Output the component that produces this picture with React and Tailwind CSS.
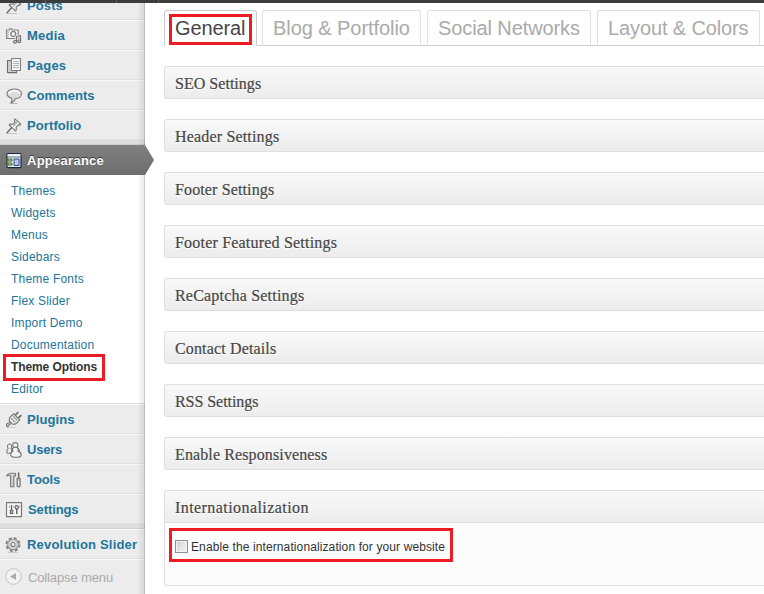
import React from "react";

const stroke = {
  fill: "none",
  stroke: "#6c6c6c",
  strokeWidth: 1.1,
  strokeLinejoin: "round",
  strokeLinecap: "round",
};

function Icon({ name }) {
  return (
    <svg width="16" height="16" viewBox="0 0 16 16" className="block shrink-0 overflow-visible" {...stroke}>
      {shapes[name]}
    </svg>
  );
}

const pin = (
  <>
    <path d="M1.500 15.500h9" stroke="#c4c4c4" />
    <path d="M1 14.700L5.500 9.800" stroke="#6c6c6c" strokeWidth="1.400" />
    <path d="M8.800 .8l6 5.400-.9 1-1.500-.3-2.300 2.400.2 2.500-1 1L3.200 7l1-1 2.600.2 2.300-2.400-.7-1.700z" fill="#f2f2f2" stroke="#777" />
    <path d="M7.500 8l3-3.500" stroke="#b0b0b0" strokeWidth="1.500" />
  </>
);

const shapes = {
  pin,
  media: (
    <>
      <path d="M3.500 2V.8h2.400V2h6.300v8.500H.5V2z" fill="#f4f4f4" stroke="#808080" />
      <path d="M.8 2.500h1.900v7.500H.8z" fill="#c8c8c8" stroke="none" />
      <circle cx="7.300" cy="6" r="2.500" fill="#e4e4e4" stroke="#777" />
      <circle cx="7.300" cy="6" r="1" fill="#fff" stroke="none" />
      <path d="M10.500 13.500V8.500l4-.8v5" stroke="#ececec" strokeWidth="2.600" />
      <path d="M10.500 13.500V8.500l4-.8v5" stroke="#777" strokeWidth="1.200" />
      <ellipse cx="9" cy="13.800" rx="1.500" ry="1.300" fill="#eee" />
      <ellipse cx="13.200" cy="13.300" rx="1.500" ry="1.300" fill="#eee" />
    </>
  ),
  pages: (
    <>
      <path d="M2 15.500h9" stroke="#ccc" />
      <path d="M5.500 2.500h-4v12h9v-2" fill="#ccc" />
      <path d="M5.500 .5h9v12h-9z" fill="#f5f5f5" stroke="#808080" />
      <path d="M7.500 3.500h5M7.500 5.500h5M7.500 7.500h5M7.500 9.500h5" stroke="#b4b4b4" />
    </>
  ),
  comments: (
    <>
      <path d="M4 15.500h7" stroke="#bbb" />
      <path
        d="M8.300 1c4.200 0 7.200 1.900 7.200 4.800s-2.800 4.900-6.300 4.900c-.6 2.200-2 3.600-4.200 4.200.8-1.400 1-2.900.8-4.600C3 9.500 1 8 1 5.800 1 2.900 4.100 1 8.300 1z"
        fill="#dcdcdc"
        stroke="#7c7c7c"
      />
      <path d="M3 5.500c.5-1.700 2.500-2.600 5.200-2.600s4.700.9 5.300 2.600" stroke="#fff" strokeWidth="1.400" />
    </>
  ),
  appearance: (
    <>
      <rect x="1" y=".7" width="14" height="14" rx="1" fill="#d5ecdf" stroke="#1d2740" strokeWidth="1.200" />
      <path d="M2 2h12" stroke="#fff" strokeWidth="1.500" />
      <path d="M2 4h12" stroke="#6b7d8f" />
      <path d="M2.500 6h3.500v2H2.500zM2.500 10h3.500v2H2.500z" fill="#d6e69a" stroke="#4b6a2c" strokeWidth="1" />
      <path d="M8.500 6H13v6.500H8.500z" fill="#b9c3f7" stroke="#3f4590" strokeWidth="1" />
    </>
  ),
  plugins: (
    <>
      <path d="M3 15.300h6" stroke="#c8c8c8" />
      <path d="M1 14.500c-1.200-1.500-.4-3.500 2.800-3.800M1.800 14.900c0-1.500 1.200-2 2.700-3" />
      <path d="M9.300 3.200L11.800 .5M12.300 6.200l2.600-2.600" strokeWidth="1.700" />
      <path d="M7.500 1.700l6.300 6.200-1.300 1c-1.300 2.500-3.400 3.600-6 3.300L3.200 9c-.1-2.600 1-4.700 3.300-5.900z" fill="#eaeaea" stroke="#757575" />
      <path d="M7.500 4.500L11 8M5.500 6.500L9 10" stroke="#999" />
    </>
  ),
  users: (
    <>
      <path d="M.8 10.500c-.2-2.200.4-3.400 1.500-4C.7 4.600 1.500 2 3.500 2s2.900 2.600 1.500 4.500c.9.500 1.400 1.200 1.500 2.200L4.500 11.300H1.700z" fill="#eee" stroke="#7c7c7c" />
      <circle cx="9.300" cy="3.200" r="2.600" fill="#f5f5f5" stroke="#7c7c7c" />
      <path d="M5.500 8.500c.2-1.600 1.600-2.600 3.700-2.600 2.400 0 4.300 1.200 4.300 4" fill="#eee" stroke="#7c7c7c" />
      <path d="M4.700 13c0-1.900.8-3.200 2.300-3.900-1.200-2-.2-4 2.400-4s3.600 2 2.500 4c2 .6 3.300 2 3.300 3.900 0 1.500-2.400 2.300-5.300 2.300S4.700 14.500 4.700 13z" fill="#f3f3f3" />
    </>
  ),
  tools: (
    <>
      <path d="M.7 4C1.700 2 2.800 1.200 5 1.200h4.500V4H7.800v10.800H4.600V4C3 3.300 1.800 3.400.7 4z" fill="#d4d4d4" stroke="#777" />
      <path d="M12.600 1v6.500" strokeWidth="1.600" />
      <path d="M11.100 8c-.3-1.500.5-2 1.500-2s1.800.5 1.500 2v6.300c0 .8-3 .8-3 0z" fill="#c4c4c4" />
      <path d="M12.600 9v4" stroke="#f5f5f5" />
    </>
  ),
  settings: (
    <>
      <path d="M.5 .7h15v14H.5z" fill="#f8f8f8" stroke="#777" strokeWidth="1.200" />
      <path d="M3.500 4v1.500M7.800 4v1.500M13.800 4v1" stroke="#aaa" />
      <path d="M5.500 3.500v5" stroke="#666" strokeWidth="1.300" />
      <rect x="4.300" y="8.200" width="2.500" height="3.300" fill="#bbb" stroke="#666" />
      <circle cx="10.800" cy="5.300" r="1.700" fill="#ddd" stroke="#666" />
      <path d="M10.800 7.300v4.200" stroke="#666" strokeWidth="1.500" />
    </>
  ),
  gear: (
    <>
      <path d="M3 15.500h8" stroke="#c8c8c8" />
      <circle cx="7" cy="7.500" r="6.500" strokeWidth="2" strokeDasharray="3 2.105" strokeLinecap="butt" stroke="#858585" />
      <circle cx="7" cy="7.500" r="5.300" fill="#ececec" stroke="#8c8c8c" />
      <circle cx="7" cy="7.500" r="3.600" stroke="#c8c8c8" />
      <circle cx="7" cy="7.500" r="2" fill="#f5f5f5" stroke="#777" />
    </>
  ),
};

function MenuItem({ icon, children, className = "" }) {
  return (
    <a
      className={
        "flex h-[30px] items-center gap-[5px] border-t border-b border-t-[#f9f9f9] border-b-[#dfdfdf] pt-[2px] pl-[6px] text-[13px] font-bold whitespace-nowrap text-[#21759b] " +
        className
      }
    >
      <Icon name={icon} />
      <span>{children}</span>
    </a>
  );
}

const submenu = [
  "Themes",
  "Widgets",
  "Menus",
  "Sidebars",
  "Theme Fonts",
  "Flex Slider",
  "Import Demo",
  "Documentation",
  "Theme Options",
  "Editor",
];

function Separator() {
  return <div className="h-[5px] shrink-0 border-b border-[#cfcfcf] bg-[#dfdfdf]" />;
}

function Sidebar() {
  return (
    <nav className="relative flex h-[591px] w-[145px] shrink-0 flex-col bg-[#ececec]">
      <div className="flex h-[17px] shrink-0 flex-col justify-end overflow-hidden">
        <MenuItem icon="pin" className="shrink-0 tracking-[0.1px]">Posts</MenuItem>
      </div>
      <MenuItem icon="media" className="tracking-[0.25px]">Media</MenuItem>
      <MenuItem icon="pages" className="tracking-[0.2px]">Pages</MenuItem>
      <MenuItem icon="comments" className="tracking-[0.05px]">Comments</MenuItem>
      <MenuItem icon="pin" className="tracking-[0.1px]">Portfolio</MenuItem>
      <Separator />
      <a className="relative z-10 flex h-[30px] items-center gap-[5px] bg-linear-to-b from-[#808080] to-[#6d6d6d] pt-[2px] pl-[6px] text-[13px] font-bold tracking-[0.27px] text-white [text-shadow:0_-1px_0_#333]">
        <Icon name="appearance" />
        <span>Appearance</span>
        <svg width="9" height="30" viewBox="0 0 9 30" className="absolute top-0 left-[145px]">
          <defs>
            <linearGradient id="arrowFill" x1="0" y1="0" x2="0" y2="1">
              <stop offset="0" stopColor="#808080" />
              <stop offset="1" stopColor="#6d6d6d" />
            </linearGradient>
          </defs>
          <path d="M0 0L9 15L0 30z" fill="url(#arrowFill)" />
        </svg>
      </a>
      <ul className="h-[229px] border-b border-[#dfdfdf] bg-white pt-[4px] text-[12px] tracking-[0.2px] text-[#21759b]">
        {submenu.map((label) => (
          <li key={label} className="relative h-[22px] pl-[11px] leading-[24px]">
            {label === "Theme Options" ? (
              <>
                <span className="font-bold tracking-[-0.1px] text-[#333]">{label}</span>
                <span className="absolute -top-px left-[3px] h-[27px] w-[102px] border-3 border-[#ed1c24]" />
              </>
            ) : (
              label
            )}
          </li>
        ))}
      </ul>
      <MenuItem icon="plugins" className="tracking-[0.1px]">Plugins</MenuItem>
      <MenuItem icon="users" className="tracking-[-0.2px]">Users</MenuItem>
      <MenuItem icon="tools" className="tracking-[-0.1px]">Tools</MenuItem>
      <MenuItem icon="settings" className="gap-[6px] tracking-[-0.1px]">Settings</MenuItem>
      <Separator />
      <MenuItem icon="gear" className="tracking-[0.2px]">Revolution Slider</MenuItem>
      <a className="flex h-[35px] items-center gap-[6px] border-t border-[#f9f9f9] pl-[5px] text-[13px] text-[#aaa]">
        <svg width="17" height="17" viewBox="0 0 17 17" className="mb-[2px] block">
          <circle cx="8.500" cy="8.500" r="7.800" fill="#f2f2f2" stroke="#c4c4c4" />
          <path d="M11 5v7L5 8.500z" fill="#aaa" />
        </svg>
        <span className="pt-[2px] tracking-[-0.13px]">Collapse menu</span>
      </a>
      <span className="pointer-events-none absolute top-0 right-0 h-full w-[8px] border-r border-black/20 bg-linear-to-r from-transparent to-black/8" />
    </nav>
  );
}

function Tab({ children, className }) {
  return (
    <div
      className={
        "relative h-[36px] shrink-0 rounded-t-[3px] border pl-[10px] text-[20px] leading-[34px] whitespace-nowrap " + className
      }
    >
      {children}
    </div>
  );
}

const panels = [
  ["SEO Settings", "tracking-[0.03px]"],
  ["Header Settings", "tracking-[0.17px]"],
  ["Footer Settings", "tracking-[0.13px]"],
  ["Footer Featured Settings", "tracking-[0.2px]"],
  ["ReCaptcha Settings", "tracking-[0.2px]"],
  ["Contact Details", "tracking-[0.15px]"],
  ["RSS Settings", "tracking-[-0.05px]"],
  ["Enable Responsiveness", "tracking-[0.12px]"],
  ["Internationalization", "tracking-[0.43px]"],
];

function Panel({ title, tracking, children }) {
  return (
    <section className="rounded-l-[3px] border border-r-0 border-[#dfdfdf] bg-[#fcfcfc]">
      <h3
        className={
          "h-[31px] rounded-l-[2px] bg-linear-to-b from-[#f9f9f9] to-[#ececec] pl-[10px] font-['Liberation_Serif',serif] text-[16px] leading-[34px] text-[#464646] [-webkit-text-stroke:0.2px_#464646] [text-shadow:0_1px_0_#fff] " +
          tracking
        }
      >
        {title}
      </h3>
      {children}
    </section>
  );
}

export default function App() {
  return (
    <div className="h-[594px] w-[764px] overflow-hidden bg-white font-['Liberation_Sans',Arial,sans-serif]">
      <header className="flex h-[3px] bg-[#3c3c3c]">
        <i className="w-[46px] border-r border-[#5a5a5a]" />
        <i className="w-[71px] border-r border-[#5a5a5a]" />
        <i className="w-[42px] border-r border-[#5a5a5a]" />
      </header>
      <div className="flex">
        <Sidebar />
        <main className="min-w-0 grow pt-[7px] pl-[19px]">
          <div className="flex gap-[5px] border-b border-[#ccc]">
            <Tab className="-mb-px w-[93px] border-[#ccc] border-b-white bg-white tracking-[-0.1px] text-[#464646]">
              General
              <span className="absolute top-[3px] left-[4px] h-[31px] w-[83px] border-3 border-[#ed1c24]" />
            </Tab>
            <Tab className="-mb-px w-[159px] border-[#dfdfdf] border-b-[#ccc] tracking-[-0.06px] text-[#aaa]">Blog &amp; Portfolio</Tab>
            <Tab className="-mb-px ml-px w-[164px] border-[#dfdfdf] border-b-[#ccc] tracking-[-0.1px] text-[#aaa]">Social Networks</Tab>
            <Tab className="-mb-px ml-px w-[163px] border-[#dfdfdf] border-b-[#ccc] tracking-[-0.12px] text-[#aaa]">Layout &amp; Colors</Tab>
          </div>
          <div className="flex flex-col gap-5 pt-5">
            {panels.map(([title, tracking]) => (
              <Panel key={title} title={title} tracking={tracking}>
                {title === "Internationalization" && (
                  <div className="relative h-[63px] border-t border-[#dfdfdf] pt-[13px] pl-[10px]">
                    <label className="flex h-5 items-center gap-[3px] text-[12px] whitespace-nowrap text-[#333]">
                      <span className="size-[13px] border border-[#8e8f8f] bg-linear-to-br from-[#cbcfd5] to-[#f6f6f6] shadow-[inset_0_0_0_1px_#f4f4f4]" />
                      <span className="pt-[2px] tracking-[0.11px]">Enable the internationalization for your website</span>
                    </label>
                    <span className="absolute top-[5px] left-[4px] h-[34px] w-[284px] border-3 border-[#ed1c24]" />
                  </div>
                )}
              </Panel>
            ))}
          </div>
        </main>
      </div>
    </div>
  );
}
